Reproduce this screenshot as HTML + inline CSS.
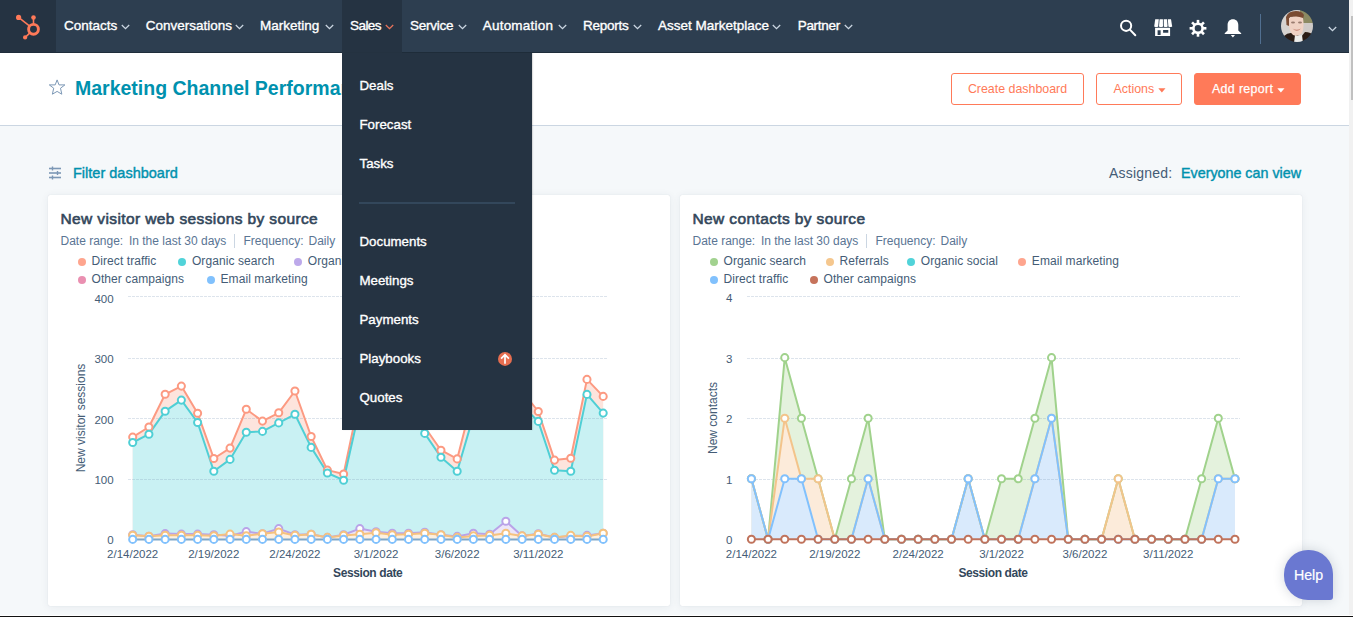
<!DOCTYPE html>
<html><head><meta charset="utf-8"><style>
*{margin:0;padding:0;box-sizing:border-box}
html,body{width:1353px;height:617px;overflow:hidden;background:#f5f8fa;font-family:'Liberation Sans',sans-serif;color:#33475b}
.abs{position:absolute}
#nav{position:absolute;left:0;top:0;width:1349px;height:53px;background:#2d3e50;border-bottom:1px solid #1f2d3b}
.ni{position:absolute;top:18px;font-size:13.5px;font-weight:400;-webkit-text-stroke:0.35px #fff;color:#fff;line-height:16px;white-space:nowrap}
#hdr{position:absolute;left:0;top:53px;width:1349px;height:73px;background:#fff;border-bottom:1px solid #cbd6e2}
.btn{position:absolute;top:73px;height:32px;border:1px solid #ff7a59;border-radius:3px;color:#ff7a59;font-size:12.4px;line-height:30px;white-space:nowrap}
.card{position:absolute;top:195px;height:411px;background:#fff;border-radius:2px;box-shadow:0 0 1px rgba(45,62,80,0.18),0 1px 8px rgba(45,62,80,0.07)}
.ct{position:absolute;font-size:15.5px;font-weight:400;-webkit-text-stroke:0.6px #33475b;letter-spacing:0.38px;color:#33475b;white-space:nowrap;line-height:18px}
.cs{position:absolute;font-size:12px;color:#5a7594;white-space:nowrap;line-height:14px}
.ld{position:absolute;width:8px;height:8px;border-radius:50%}
.lt{position:absolute;font-size:12px;color:#445c76;white-space:nowrap;line-height:16px;letter-spacing:0.08px}
.ax{font-size:11.5px;fill:#445c76;font-family:'Liberation Sans',sans-serif;}
.axt{font-size:12px;font-weight:700;letter-spacing:-0.4px;fill:#33475b;font-family:'Liberation Sans',sans-serif;}
.axr{font-size:12px;fill:#445c76;font-family:'Liberation Sans',sans-serif;}
#dd{position:absolute;left:342px;top:53px;width:190px;height:377px;background:#253342;box-shadow:1px 0 1px rgba(0,0,0,0.12)}
.di{position:absolute;left:17.5px;font-size:13.3px;font-weight:400;-webkit-text-stroke:0.35px #fff;color:#fff;line-height:16px;white-space:nowrap}
</style></head><body>
<div id="nav">
  <div class="abs" style="left:0;top:0;width:56px;height:52px;background:#253342"></div>
  <div class="abs" style="left:342px;top:0;width:59.7px;height:53px;background:#253342"></div>
  <svg class="abs" style="left:0;top:0" width="56" height="52" viewBox="0 0 56 52">
    <g fill="#ff7a59" stroke="#ff7a59">
      <circle cx="33.5" cy="29.3" r="4.9" fill="none" stroke-width="2.9"/>
      <line x1="18.6" y1="17.4" x2="30" y2="26.4" stroke-width="1.5"/>
      <line x1="33.5" y1="18" x2="33.5" y2="24" stroke-width="1.6"/>
      <line x1="25.2" y1="37.3" x2="30.2" y2="32.6" stroke-width="1.6"/>
      <circle cx="18.6" cy="17.4" r="2.6" stroke="none"/>
      <circle cx="33.5" cy="17.5" r="2.3" stroke="none"/>
      <circle cx="25.1" cy="37.4" r="2.1" stroke="none"/>
    </g>
  </svg>
  <span class="ni" style="left:64px;letter-spacing:0px">Contacts</span><span class="ni" style="left:145.7px;letter-spacing:0px">Conversations</span><span class="ni" style="left:260px;letter-spacing:0px">Marketing</span><span class="ni" style="left:350px;letter-spacing:-0.55px">Sales</span><span class="ni" style="left:410px;letter-spacing:-0.25px">Service</span><span class="ni" style="left:482.8px;letter-spacing:0.2px">Automation</span><span class="ni" style="left:583px;letter-spacing:-0.25px">Reports</span><span class="ni" style="left:658px;letter-spacing:0px">Asset Marketplace</span><span class="ni" style="left:797.7px;letter-spacing:-0.3px">Partner</span><svg style="position:absolute;left:121px;top:23.5px" width="9" height="6" viewBox="0 0 9 6"><path d="M0.8 1 L4.5 4.6 L8.2 1" fill="none" stroke="#cbd6e2" stroke-width="1.3"/></svg><svg style="position:absolute;left:235px;top:23.5px" width="9" height="6" viewBox="0 0 9 6"><path d="M0.8 1 L4.5 4.6 L8.2 1" fill="none" stroke="#cbd6e2" stroke-width="1.3"/></svg><svg style="position:absolute;left:325px;top:23.5px" width="9" height="6" viewBox="0 0 9 6"><path d="M0.8 1 L4.5 4.6 L8.2 1" fill="none" stroke="#cbd6e2" stroke-width="1.3"/></svg><svg style="position:absolute;left:385px;top:23.5px" width="9" height="6" viewBox="0 0 9 6"><path d="M0.8 1 L4.5 4.6 L8.2 1" fill="none" stroke="#e8735a" stroke-width="1.3"/></svg><svg style="position:absolute;left:458px;top:23.5px" width="9" height="6" viewBox="0 0 9 6"><path d="M0.8 1 L4.5 4.6 L8.2 1" fill="none" stroke="#cbd6e2" stroke-width="1.3"/></svg><svg style="position:absolute;left:558px;top:23.5px" width="9" height="6" viewBox="0 0 9 6"><path d="M0.8 1 L4.5 4.6 L8.2 1" fill="none" stroke="#cbd6e2" stroke-width="1.3"/></svg><svg style="position:absolute;left:633px;top:23.5px" width="9" height="6" viewBox="0 0 9 6"><path d="M0.8 1 L4.5 4.6 L8.2 1" fill="none" stroke="#cbd6e2" stroke-width="1.3"/></svg><svg style="position:absolute;left:772px;top:23.5px" width="9" height="6" viewBox="0 0 9 6"><path d="M0.8 1 L4.5 4.6 L8.2 1" fill="none" stroke="#cbd6e2" stroke-width="1.3"/></svg><svg style="position:absolute;left:844px;top:23.5px" width="9" height="6" viewBox="0 0 9 6"><path d="M0.8 1 L4.5 4.6 L8.2 1" fill="none" stroke="#cbd6e2" stroke-width="1.3"/></svg>
  <svg class="abs" style="left:1110px;top:10px" width="160" height="36" viewBox="1110 10 160 36">
    <circle cx="1126.1" cy="25.8" r="5.1" fill="none" stroke="#fff" stroke-width="2"/>
    <line x1="1129.9" y1="29.6" x2="1135.3" y2="35.2" stroke="#fff" stroke-width="2" stroke-linecap="round"/>
    <g fill="#fff">
      <path d="M1155.2 19.3 H1158.8 L1158.2 26.5 Q1156.5 27.6 1154.2 26.5 Z"/>
      <path d="M1159.6 19.3 H1162.9 L1163 26.5 Q1161 27.6 1159 26.5 Z"/>
      <path d="M1163.7 19.3 H1167 L1167.6 26.5 Q1165.6 27.6 1163.8 26.5 Z"/>
      <path d="M1167.8 19.3 H1171 L1172.2 26.5 Q1170.2 27.6 1168.4 26.5 Z"/>
      <path d="M1155.1 27.8 H1170.1 V35.9 H1155.1 Z M1157.6 30.2 V34.9 H1160.6 V30.2 Z M1163.1 30 V32.8 H1168.3 V30 Z" fill-rule="evenodd"/>
    </g>
    <g transform="translate(1198 28.3)" fill="#fff"><circle r="4.6" fill="none" stroke="#fff" stroke-width="2.6"/><rect x="-1.3" y="-8.4" width="2.6" height="4" transform="rotate(0)"/><rect x="-1.3" y="-8.4" width="2.6" height="4" transform="rotate(45)"/><rect x="-1.3" y="-8.4" width="2.6" height="4" transform="rotate(90)"/><rect x="-1.3" y="-8.4" width="2.6" height="4" transform="rotate(135)"/><rect x="-1.3" y="-8.4" width="2.6" height="4" transform="rotate(180)"/><rect x="-1.3" y="-8.4" width="2.6" height="4" transform="rotate(225)"/><rect x="-1.3" y="-8.4" width="2.6" height="4" transform="rotate(270)"/><rect x="-1.3" y="-8.4" width="2.6" height="4" transform="rotate(315)"/></g>
    <path fill="#fff" d="M1232.9 19.3 C1229.6 19.3 1227.6 21.6 1227.6 25 V30.6 L1224.7 33.2 V34 H1241.2 V33.2 L1238.3 30.6 V25 C1238.3 21.6 1236.3 19.3 1232.9 19.3 Z M1230.8 35 H1235 L1232.9 37.6 Z"/>
    <line x1="1260.5" y1="14" x2="1260.5" y2="44" stroke="#516f90" stroke-width="1"/>
  </svg>
  <svg class="abs" style="left:1281px;top:10px" width="32" height="32" viewBox="0 0 32 32">
    <defs><clipPath id="avc"><circle cx="16" cy="16" r="16"/></clipPath><filter id="avb" x="-10%" y="-10%" width="120%" height="120%"><feGaussianBlur stdDeviation="0.7"/></filter></defs>
    <g clip-path="url(#avc)"><g filter="url(#avb)">
      <rect x="-2" y="-2" width="36" height="36" fill="#d6d2cf"/>
      <rect x="19" y="-2" width="15" height="16" fill="#8c8a62"/>
      <rect x="22" y="13" width="12" height="12" fill="#cfcac7"/>
      <path d="M2 40 L3 26 Q8 21 14 24 L20 27 L24 22 Q30 22 33 26 L33 40 Z" fill="#2b1c12"/>
      <path d="M13 33 L14 25 Q17 26.5 21 25 L22 33 Z" fill="#ececea"/>
      <path d="M5 7 Q7 1 15 1 Q21 1 23 5 L22 9 Q16 6 9 7 L8 16 L5.5 15 Z" fill="#7a4b33"/>
      <path d="M8 8 Q15 5 22 8 Q23.5 17 21 23 Q17 27 12 25 Q8 21 8 14 Z" fill="#f0d2c4"/>
      <ellipse cx="12" cy="12.5" rx="2" ry="0.9" fill="#9b7c70"/>
      <ellipse cx="19" cy="12.5" rx="2" ry="0.9" fill="#9b7c70"/>
      <path d="M11.5 18.5 Q15.5 21 20 18.5 Q16 23 11.5 18.5 Z" fill="#c07a6a"/>
    </g></g>
  </svg>
  <svg style="position:absolute;left:1327.5px;top:25.8px" width="9" height="6" viewBox="0 0 9 6"><path d="M0.8 1 L4.5 4.6 L8.2 1" fill="none" stroke="#cbd6e2" stroke-width="1.3"/></svg>
</div>
<div id="hdr">
  <svg class="abs" style="left:48px;top:25.8px" width="18" height="17" viewBox="0 0 18 17"><path d="M9.1 0.9 L11 5.9 L16.9 5.9 L12.5 9.2 L13.8 15.2 L9.1 12.4 L4.4 15.2 L5.7 9.2 L1.3 5.9 L7.2 5.9 Z" fill="none" stroke="#7c98b6" stroke-width="1" stroke-linejoin="miter"/></svg>
  <div class="abs" style="left:75px;top:23px;font-size:19.5px;font-weight:700;color:#0091ae;line-height:24px;white-space:nowrap">Marketing Channel Performance</div>
</div>
<div class="btn" style="left:951px;width:133px;text-align:center">Create dashboard</div>
<div class="btn" style="left:1096px;width:86px;padding-left:16.5px">Actions<svg style="position:absolute;left:61px;top:13.5px" width="8" height="5" viewBox="0 0 8 5"><path d="M0.3 0.3 H7.5 L3.9 4.4 Z" fill="#ff7a59"/></svg></div>
<div class="btn" style="left:1194px;width:107px;background:#ff7a59;color:#fff;padding-left:17px;letter-spacing:0.35px;-webkit-text-stroke:0.25px #fff">Add report<svg style="position:absolute;left:82px;top:13.5px" width="8" height="5" viewBox="0 0 8 5"><path d="M0.3 0.3 H7.5 L3.9 4.4 Z" fill="#fff"/></svg></div>

<svg class="abs" style="left:48px;top:166px" width="14" height="14" viewBox="0 0 14 14"><g stroke="#7c98b6" stroke-width="1.6"><line x1="1" y1="2.5" x2="13" y2="2.5"/><line x1="1" y1="7" x2="13" y2="7"/><line x1="1" y1="11.5" x2="13" y2="11.5"/></g><g stroke="#7c98b6" stroke-width="1.4"><line x1="4.5" y1="0.5" x2="4.5" y2="4.5"/><line x1="9.5" y1="5" x2="9.5" y2="9"/><line x1="4.5" y1="9.5" x2="4.5" y2="13.5"/></g></svg>
<div class="abs" style="left:73px;top:164.5px;font-size:14.5px;font-weight:400;-webkit-text-stroke:0.4px #0091ae;color:#0091ae;line-height:16px;white-space:nowrap">Filter dashboard</div>
<div class="abs" style="left:1109px;top:164.5px;font-size:14px;letter-spacing:0.22px;color:#445c76;line-height:16px;white-space:nowrap">Assigned:</div>
<div class="abs" style="left:1181px;top:164.5px;font-size:14.3px;font-weight:400;-webkit-text-stroke:0.4px #0091ae;color:#0091ae;line-height:16px;white-space:nowrap">Everyone can view</div>

<div class="card" style="left:48px;width:622px"></div>
<div class="card" style="left:680px;width:622px"></div>
<div class="ct" style="left:60.5px;top:209.5px">New visitor web sessions by source</div>
<div class="cs" style="left:60.5px;top:234px">Date range:<span style="margin-left:2.4px"> In the last 30 days</span></div>
<div class="abs" style="left:234px;top:234px;width:1px;height:14px;background:#cbd6e2"></div>
<div class="cs" style="left:243.5px;top:234px">Frequency:<span style="margin-left:1.6px"> Daily</span></div>
<div class="ct" style="left:692.5px;top:209.5px">New contacts by source</div>
<div class="cs" style="left:692.5px;top:234px">Date range:<span style="margin-left:2.4px"> In the last 30 days</span></div>
<div class="abs" style="left:866px;top:234px;width:1px;height:14px;background:#cbd6e2"></div>
<div class="cs" style="left:875.5px;top:234px">Frequency:<span style="margin-left:1.6px"> Daily</span></div>
<span class="ld" style="left:77.7px;top:257.8px;background:#fea58e"></span><span class="lt" style="left:91.5px;top:253px">Direct traffic</span><span class="ld" style="left:178.1px;top:257.8px;background:#51d3d9"></span><span class="lt" style="left:191.9px;top:253px">Organic search</span><span class="ld" style="left:294px;top:257.8px;background:#bda9ea"></span><span class="lt" style="left:307.8px;top:253px">Organic social</span><span class="ld" style="left:77.7px;top:275.5px;background:#ea90b1"></span><span class="lt" style="left:91.5px;top:270.7px">Other campaigns</span><span class="ld" style="left:206.7px;top:275.5px;background:#81c1fd"></span><span class="lt" style="left:220.5px;top:270.7px">Email marketing</span><span class="ld" style="left:709.7px;top:257.8px;background:#a2d28f"></span><span class="lt" style="left:723.5px;top:253px">Organic search</span><span class="ld" style="left:825.7px;top:257.8px;background:#f5c78e"></span><span class="lt" style="left:839.5px;top:253px">Referrals</span><span class="ld" style="left:907px;top:257.8px;background:#51d3d9"></span><span class="lt" style="left:920.8px;top:253px">Organic social</span><span class="ld" style="left:1018px;top:257.8px;background:#fea58e"></span><span class="lt" style="left:1031.8px;top:253px">Email marketing</span><span class="ld" style="left:709.7px;top:275.5px;background:#81c1fd"></span><span class="lt" style="left:723.5px;top:270.7px">Direct traffic</span><span class="ld" style="left:809.7px;top:275.5px;background:#c6735b"></span><span class="lt" style="left:823.5px;top:270.7px">Other campaigns</span>
<svg class="abs" style="left:0;top:0" width="1353" height="617" viewBox="0 0 1353 617">
<text x="113.6" y="302.5" text-anchor="end" class="ax">400</text><text x="113.6" y="363" text-anchor="end" class="ax">300</text><text x="113.6" y="423.5" text-anchor="end" class="ax">200</text><text x="113.6" y="484" text-anchor="end" class="ax">100</text><text x="113.6" y="544.4" text-anchor="end" class="ax">0</text><path d="M132.7 437.1 L148.92 427 L165.15 394.3 L181.37 386.1 L197.6 413.2 L213.82 458.5 L230.04 448.1 L246.27 409.3 L262.49 421.1 L278.72 412.8 L294.94 391 L311.16 436.5 L327.39 470.1 L343.61 474 L359.84 397 L376.06 380 L392.28 385 L408.51 395 L424.73 427 L440.96 450.2 L457.18 458.9 L473.4 395.5 L489.63 380 L505.85 370 L522.08 391 L538.3 411.5 L554.52 460.1 L570.75 458.2 L586.97 379.4 L603.2 396.4 L603.2 539.4 L132.7 539.4 Z" fill="#fde4dd"/><path d="M132.7 442.5 L148.92 434.2 L165.15 411.2 L181.37 400.1 L197.6 422.5 L213.82 471.3 L230.04 459.4 L246.27 432.2 L262.49 431.4 L278.72 422.9 L294.94 414.3 L311.16 447.4 L327.39 473 L343.61 480.2 L359.84 408 L376.06 395 L392.28 400 L408.51 410 L424.73 433.4 L440.96 457.3 L457.18 471.3 L473.4 415.9 L489.63 395 L505.85 385 L522.08 405.8 L538.3 421.4 L554.52 470.2 L570.75 471.2 L586.97 394.4 L603.2 413.1 L603.2 539.4 L132.7 539.4 Z" fill="#c9f1f3"/><path d="M132.7 534.7 L148.92 536.2 L165.15 533.6 L181.37 534.1 L197.6 534.1 L213.82 534.7 L230.04 535.7 L246.27 531.6 L262.49 533.8 L278.72 528.6 L294.94 534.8 L311.16 534.3 L327.39 537.4 L343.61 534.8 L359.84 528.6 L376.06 531.7 L392.28 533.3 L408.51 533.3 L424.73 532.2 L440.96 534.8 L457.18 536.4 L473.4 533.3 L489.63 534.3 L505.85 521.2 L522.08 535.9 L538.3 533.8 L554.52 537.4 L570.75 535.9 L586.97 535.4 L603.2 533.3 L603.2 539.4 L132.7 539.4 Z" fill="#ece6f9"/><path d="M132.7 535.2 L148.92 536.2 L165.15 535.2 L181.37 535.2 L197.6 535.2 L213.82 535.7 L230.04 534.1 L246.27 535.7 L262.49 533.8 L278.72 532 L294.94 535.4 L311.16 534.3 L327.39 537.4 L343.61 535.4 L359.84 534.3 L376.06 532.8 L392.28 534.8 L408.51 534.3 L424.73 533.3 L440.96 534.8 L457.18 537.4 L473.4 535.9 L489.63 535.4 L505.85 533.3 L522.08 535.9 L538.3 534.3 L554.52 537.4 L570.75 535.4 L586.97 536.4 L603.2 533.3 L603.2 539.4 L132.7 539.4 Z" fill="#fdf0e0"/><line x1="128" y1="296.5" x2="607" y2="296.5" stroke="#7c98b6" stroke-width="1" stroke-dasharray="3 1" opacity="0.25"/><line x1="128" y1="358.5" x2="607" y2="358.5" stroke="#7c98b6" stroke-width="1" stroke-dasharray="3 1" opacity="0.25"/><line x1="128" y1="418.5" x2="607" y2="418.5" stroke="#7c98b6" stroke-width="1" stroke-dasharray="3 1" opacity="0.25"/><line x1="128" y1="479.5" x2="607" y2="479.5" stroke="#7c98b6" stroke-width="1" stroke-dasharray="3 1" opacity="0.25"/><path d="M132.7 437.1 L148.92 427 L165.15 394.3 L181.37 386.1 L197.6 413.2 L213.82 458.5 L230.04 448.1 L246.27 409.3 L262.49 421.1 L278.72 412.8 L294.94 391 L311.16 436.5 L327.39 470.1 L343.61 474 L359.84 397 L376.06 380 L392.28 385 L408.51 395 L424.73 427 L440.96 450.2 L457.18 458.9 L473.4 395.5 L489.63 380 L505.85 370 L522.08 391 L538.3 411.5 L554.52 460.1 L570.75 458.2 L586.97 379.4 L603.2 396.4" fill="none" stroke="#fc9a82" stroke-width="2" stroke-linejoin="round"/><path d="M132.7 442.5 L148.92 434.2 L165.15 411.2 L181.37 400.1 L197.6 422.5 L213.82 471.3 L230.04 459.4 L246.27 432.2 L262.49 431.4 L278.72 422.9 L294.94 414.3 L311.16 447.4 L327.39 473 L343.61 480.2 L359.84 408 L376.06 395 L392.28 400 L408.51 410 L424.73 433.4 L440.96 457.3 L457.18 471.3 L473.4 415.9 L489.63 395 L505.85 385 L522.08 405.8 L538.3 421.4 L554.52 470.2 L570.75 471.2 L586.97 394.4 L603.2 413.1" fill="none" stroke="#4fcfd5" stroke-width="2" stroke-linejoin="round"/><path d="M132.7 534.7 L148.92 536.2 L165.15 533.6 L181.37 534.1 L197.6 534.1 L213.82 534.7 L230.04 535.7 L246.27 531.6 L262.49 533.8 L278.72 528.6 L294.94 534.8 L311.16 534.3 L327.39 537.4 L343.61 534.8 L359.84 528.6 L376.06 531.7 L392.28 533.3 L408.51 533.3 L424.73 532.2 L440.96 534.8 L457.18 536.4 L473.4 533.3 L489.63 534.3 L505.85 521.2 L522.08 535.9 L538.3 533.8 L554.52 537.4 L570.75 535.9 L586.97 535.4 L603.2 533.3" fill="none" stroke="#b9a3e8" stroke-width="2" stroke-linejoin="round"/><path d="M132.7 535.2 L148.92 536.2 L165.15 535.2 L181.37 535.2 L197.6 535.2 L213.82 535.7 L230.04 534.1 L246.27 535.7 L262.49 533.8 L278.72 532 L294.94 535.4 L311.16 534.3 L327.39 537.4 L343.61 535.4 L359.84 534.3 L376.06 532.8 L392.28 534.8 L408.51 534.3 L424.73 533.3 L440.96 534.8 L457.18 537.4 L473.4 535.9 L489.63 535.4 L505.85 533.3 L522.08 535.9 L538.3 534.3 L554.52 537.4 L570.75 535.4 L586.97 536.4 L603.2 533.3" fill="none" stroke="#f5c27f" stroke-width="2" stroke-linejoin="round"/><path d="M132.7 539.4 L148.92 539.4 L165.15 539.4 L181.37 539.4 L197.6 539.4 L213.82 539.4 L230.04 539.4 L246.27 539.4 L262.49 539.4 L278.72 539.4 L294.94 539.4 L311.16 539.4 L327.39 539.4 L343.61 539.4 L359.84 539.4 L376.06 539.4 L392.28 539.4 L408.51 539.4 L424.73 539.4 L440.96 539.4 L457.18 539.4 L473.4 539.4 L489.63 539.4 L505.85 539.4 L522.08 539.4 L538.3 539.4 L554.52 539.4 L570.75 539.4 L586.97 539.4 L603.2 539.4" fill="none" stroke="#7fa7c9" stroke-width="2"/><circle cx="132.7" cy="437.1" r="3.55" fill="#fff" stroke="#fc9a82" stroke-width="2"/><circle cx="148.92" cy="427" r="3.55" fill="#fff" stroke="#fc9a82" stroke-width="2"/><circle cx="165.15" cy="394.3" r="3.55" fill="#fff" stroke="#fc9a82" stroke-width="2"/><circle cx="181.37" cy="386.1" r="3.55" fill="#fff" stroke="#fc9a82" stroke-width="2"/><circle cx="197.6" cy="413.2" r="3.55" fill="#fff" stroke="#fc9a82" stroke-width="2"/><circle cx="213.82" cy="458.5" r="3.55" fill="#fff" stroke="#fc9a82" stroke-width="2"/><circle cx="230.04" cy="448.1" r="3.55" fill="#fff" stroke="#fc9a82" stroke-width="2"/><circle cx="246.27" cy="409.3" r="3.55" fill="#fff" stroke="#fc9a82" stroke-width="2"/><circle cx="262.49" cy="421.1" r="3.55" fill="#fff" stroke="#fc9a82" stroke-width="2"/><circle cx="278.72" cy="412.8" r="3.55" fill="#fff" stroke="#fc9a82" stroke-width="2"/><circle cx="294.94" cy="391" r="3.55" fill="#fff" stroke="#fc9a82" stroke-width="2"/><circle cx="311.16" cy="436.5" r="3.55" fill="#fff" stroke="#fc9a82" stroke-width="2"/><circle cx="327.39" cy="470.1" r="3.55" fill="#fff" stroke="#fc9a82" stroke-width="2"/><circle cx="343.61" cy="474" r="3.55" fill="#fff" stroke="#fc9a82" stroke-width="2"/><circle cx="359.84" cy="397" r="3.55" fill="#fff" stroke="#fc9a82" stroke-width="2"/><circle cx="376.06" cy="380" r="3.55" fill="#fff" stroke="#fc9a82" stroke-width="2"/><circle cx="392.28" cy="385" r="3.55" fill="#fff" stroke="#fc9a82" stroke-width="2"/><circle cx="408.51" cy="395" r="3.55" fill="#fff" stroke="#fc9a82" stroke-width="2"/><circle cx="424.73" cy="427" r="3.55" fill="#fff" stroke="#fc9a82" stroke-width="2"/><circle cx="440.96" cy="450.2" r="3.55" fill="#fff" stroke="#fc9a82" stroke-width="2"/><circle cx="457.18" cy="458.9" r="3.55" fill="#fff" stroke="#fc9a82" stroke-width="2"/><circle cx="473.4" cy="395.5" r="3.55" fill="#fff" stroke="#fc9a82" stroke-width="2"/><circle cx="489.63" cy="380" r="3.55" fill="#fff" stroke="#fc9a82" stroke-width="2"/><circle cx="505.85" cy="370" r="3.55" fill="#fff" stroke="#fc9a82" stroke-width="2"/><circle cx="522.08" cy="391" r="3.55" fill="#fff" stroke="#fc9a82" stroke-width="2"/><circle cx="538.3" cy="411.5" r="3.55" fill="#fff" stroke="#fc9a82" stroke-width="2"/><circle cx="554.52" cy="460.1" r="3.55" fill="#fff" stroke="#fc9a82" stroke-width="2"/><circle cx="570.75" cy="458.2" r="3.55" fill="#fff" stroke="#fc9a82" stroke-width="2"/><circle cx="586.97" cy="379.4" r="3.55" fill="#fff" stroke="#fc9a82" stroke-width="2"/><circle cx="603.2" cy="396.4" r="3.55" fill="#fff" stroke="#fc9a82" stroke-width="2"/><circle cx="132.7" cy="442.5" r="3.55" fill="#fff" stroke="#4fcfd5" stroke-width="2"/><circle cx="148.92" cy="434.2" r="3.55" fill="#fff" stroke="#4fcfd5" stroke-width="2"/><circle cx="165.15" cy="411.2" r="3.55" fill="#fff" stroke="#4fcfd5" stroke-width="2"/><circle cx="181.37" cy="400.1" r="3.55" fill="#fff" stroke="#4fcfd5" stroke-width="2"/><circle cx="197.6" cy="422.5" r="3.55" fill="#fff" stroke="#4fcfd5" stroke-width="2"/><circle cx="213.82" cy="471.3" r="3.55" fill="#fff" stroke="#4fcfd5" stroke-width="2"/><circle cx="230.04" cy="459.4" r="3.55" fill="#fff" stroke="#4fcfd5" stroke-width="2"/><circle cx="246.27" cy="432.2" r="3.55" fill="#fff" stroke="#4fcfd5" stroke-width="2"/><circle cx="262.49" cy="431.4" r="3.55" fill="#fff" stroke="#4fcfd5" stroke-width="2"/><circle cx="278.72" cy="422.9" r="3.55" fill="#fff" stroke="#4fcfd5" stroke-width="2"/><circle cx="294.94" cy="414.3" r="3.55" fill="#fff" stroke="#4fcfd5" stroke-width="2"/><circle cx="311.16" cy="447.4" r="3.55" fill="#fff" stroke="#4fcfd5" stroke-width="2"/><circle cx="327.39" cy="473" r="3.55" fill="#fff" stroke="#4fcfd5" stroke-width="2"/><circle cx="343.61" cy="480.2" r="3.55" fill="#fff" stroke="#4fcfd5" stroke-width="2"/><circle cx="359.84" cy="408" r="3.55" fill="#fff" stroke="#4fcfd5" stroke-width="2"/><circle cx="376.06" cy="395" r="3.55" fill="#fff" stroke="#4fcfd5" stroke-width="2"/><circle cx="392.28" cy="400" r="3.55" fill="#fff" stroke="#4fcfd5" stroke-width="2"/><circle cx="408.51" cy="410" r="3.55" fill="#fff" stroke="#4fcfd5" stroke-width="2"/><circle cx="424.73" cy="433.4" r="3.55" fill="#fff" stroke="#4fcfd5" stroke-width="2"/><circle cx="440.96" cy="457.3" r="3.55" fill="#fff" stroke="#4fcfd5" stroke-width="2"/><circle cx="457.18" cy="471.3" r="3.55" fill="#fff" stroke="#4fcfd5" stroke-width="2"/><circle cx="473.4" cy="415.9" r="3.55" fill="#fff" stroke="#4fcfd5" stroke-width="2"/><circle cx="489.63" cy="395" r="3.55" fill="#fff" stroke="#4fcfd5" stroke-width="2"/><circle cx="505.85" cy="385" r="3.55" fill="#fff" stroke="#4fcfd5" stroke-width="2"/><circle cx="522.08" cy="405.8" r="3.55" fill="#fff" stroke="#4fcfd5" stroke-width="2"/><circle cx="538.3" cy="421.4" r="3.55" fill="#fff" stroke="#4fcfd5" stroke-width="2"/><circle cx="554.52" cy="470.2" r="3.55" fill="#fff" stroke="#4fcfd5" stroke-width="2"/><circle cx="570.75" cy="471.2" r="3.55" fill="#fff" stroke="#4fcfd5" stroke-width="2"/><circle cx="586.97" cy="394.4" r="3.55" fill="#fff" stroke="#4fcfd5" stroke-width="2"/><circle cx="603.2" cy="413.1" r="3.55" fill="#fff" stroke="#4fcfd5" stroke-width="2"/><circle cx="132.7" cy="534.7" r="3.55" fill="#fff" stroke="#b9a3e8" stroke-width="2"/><circle cx="148.92" cy="536.2" r="3.55" fill="#fff" stroke="#b9a3e8" stroke-width="2"/><circle cx="165.15" cy="533.6" r="3.55" fill="#fff" stroke="#b9a3e8" stroke-width="2"/><circle cx="181.37" cy="534.1" r="3.55" fill="#fff" stroke="#b9a3e8" stroke-width="2"/><circle cx="197.6" cy="534.1" r="3.55" fill="#fff" stroke="#b9a3e8" stroke-width="2"/><circle cx="213.82" cy="534.7" r="3.55" fill="#fff" stroke="#b9a3e8" stroke-width="2"/><circle cx="230.04" cy="535.7" r="3.55" fill="#fff" stroke="#b9a3e8" stroke-width="2"/><circle cx="246.27" cy="531.6" r="3.55" fill="#fff" stroke="#b9a3e8" stroke-width="2"/><circle cx="262.49" cy="533.8" r="3.55" fill="#fff" stroke="#b9a3e8" stroke-width="2"/><circle cx="278.72" cy="528.6" r="3.55" fill="#fff" stroke="#b9a3e8" stroke-width="2"/><circle cx="294.94" cy="534.8" r="3.55" fill="#fff" stroke="#b9a3e8" stroke-width="2"/><circle cx="311.16" cy="534.3" r="3.55" fill="#fff" stroke="#b9a3e8" stroke-width="2"/><circle cx="327.39" cy="537.4" r="3.55" fill="#fff" stroke="#b9a3e8" stroke-width="2"/><circle cx="343.61" cy="534.8" r="3.55" fill="#fff" stroke="#b9a3e8" stroke-width="2"/><circle cx="359.84" cy="528.6" r="3.55" fill="#fff" stroke="#b9a3e8" stroke-width="2"/><circle cx="376.06" cy="531.7" r="3.55" fill="#fff" stroke="#b9a3e8" stroke-width="2"/><circle cx="392.28" cy="533.3" r="3.55" fill="#fff" stroke="#b9a3e8" stroke-width="2"/><circle cx="408.51" cy="533.3" r="3.55" fill="#fff" stroke="#b9a3e8" stroke-width="2"/><circle cx="424.73" cy="532.2" r="3.55" fill="#fff" stroke="#b9a3e8" stroke-width="2"/><circle cx="440.96" cy="534.8" r="3.55" fill="#fff" stroke="#b9a3e8" stroke-width="2"/><circle cx="457.18" cy="536.4" r="3.55" fill="#fff" stroke="#b9a3e8" stroke-width="2"/><circle cx="473.4" cy="533.3" r="3.55" fill="#fff" stroke="#b9a3e8" stroke-width="2"/><circle cx="489.63" cy="534.3" r="3.55" fill="#fff" stroke="#b9a3e8" stroke-width="2"/><circle cx="505.85" cy="521.2" r="3.55" fill="#fff" stroke="#b9a3e8" stroke-width="2"/><circle cx="522.08" cy="535.9" r="3.55" fill="#fff" stroke="#b9a3e8" stroke-width="2"/><circle cx="538.3" cy="533.8" r="3.55" fill="#fff" stroke="#b9a3e8" stroke-width="2"/><circle cx="554.52" cy="537.4" r="3.55" fill="#fff" stroke="#b9a3e8" stroke-width="2"/><circle cx="570.75" cy="535.9" r="3.55" fill="#fff" stroke="#b9a3e8" stroke-width="2"/><circle cx="586.97" cy="535.4" r="3.55" fill="#fff" stroke="#b9a3e8" stroke-width="2"/><circle cx="603.2" cy="533.3" r="3.55" fill="#fff" stroke="#b9a3e8" stroke-width="2"/><circle cx="132.7" cy="535.2" r="3.55" fill="#fff" stroke="#f5c27f" stroke-width="2"/><circle cx="148.92" cy="536.2" r="3.55" fill="#fff" stroke="#f5c27f" stroke-width="2"/><circle cx="165.15" cy="535.2" r="3.55" fill="#fff" stroke="#f5c27f" stroke-width="2"/><circle cx="181.37" cy="535.2" r="3.55" fill="#fff" stroke="#f5c27f" stroke-width="2"/><circle cx="197.6" cy="535.2" r="3.55" fill="#fff" stroke="#f5c27f" stroke-width="2"/><circle cx="213.82" cy="535.7" r="3.55" fill="#fff" stroke="#f5c27f" stroke-width="2"/><circle cx="230.04" cy="534.1" r="3.55" fill="#fff" stroke="#f5c27f" stroke-width="2"/><circle cx="246.27" cy="535.7" r="3.55" fill="#fff" stroke="#f5c27f" stroke-width="2"/><circle cx="262.49" cy="533.8" r="3.55" fill="#fff" stroke="#f5c27f" stroke-width="2"/><circle cx="278.72" cy="532" r="3.55" fill="#fff" stroke="#f5c27f" stroke-width="2"/><circle cx="294.94" cy="535.4" r="3.55" fill="#fff" stroke="#f5c27f" stroke-width="2"/><circle cx="311.16" cy="534.3" r="3.55" fill="#fff" stroke="#f5c27f" stroke-width="2"/><circle cx="327.39" cy="537.4" r="3.55" fill="#fff" stroke="#f5c27f" stroke-width="2"/><circle cx="343.61" cy="535.4" r="3.55" fill="#fff" stroke="#f5c27f" stroke-width="2"/><circle cx="359.84" cy="534.3" r="3.55" fill="#fff" stroke="#f5c27f" stroke-width="2"/><circle cx="376.06" cy="532.8" r="3.55" fill="#fff" stroke="#f5c27f" stroke-width="2"/><circle cx="392.28" cy="534.8" r="3.55" fill="#fff" stroke="#f5c27f" stroke-width="2"/><circle cx="408.51" cy="534.3" r="3.55" fill="#fff" stroke="#f5c27f" stroke-width="2"/><circle cx="424.73" cy="533.3" r="3.55" fill="#fff" stroke="#f5c27f" stroke-width="2"/><circle cx="440.96" cy="534.8" r="3.55" fill="#fff" stroke="#f5c27f" stroke-width="2"/><circle cx="457.18" cy="537.4" r="3.55" fill="#fff" stroke="#f5c27f" stroke-width="2"/><circle cx="473.4" cy="535.9" r="3.55" fill="#fff" stroke="#f5c27f" stroke-width="2"/><circle cx="489.63" cy="535.4" r="3.55" fill="#fff" stroke="#f5c27f" stroke-width="2"/><circle cx="505.85" cy="533.3" r="3.55" fill="#fff" stroke="#f5c27f" stroke-width="2"/><circle cx="522.08" cy="535.9" r="3.55" fill="#fff" stroke="#f5c27f" stroke-width="2"/><circle cx="538.3" cy="534.3" r="3.55" fill="#fff" stroke="#f5c27f" stroke-width="2"/><circle cx="554.52" cy="537.4" r="3.55" fill="#fff" stroke="#f5c27f" stroke-width="2"/><circle cx="570.75" cy="535.4" r="3.55" fill="#fff" stroke="#f5c27f" stroke-width="2"/><circle cx="586.97" cy="536.4" r="3.55" fill="#fff" stroke="#f5c27f" stroke-width="2"/><circle cx="603.2" cy="533.3" r="3.55" fill="#fff" stroke="#f5c27f" stroke-width="2"/><circle cx="132.7" cy="539.4" r="3.55" fill="#fff" stroke="#81c1fd" stroke-width="2"/><circle cx="148.92" cy="539.4" r="3.55" fill="#fff" stroke="#81c1fd" stroke-width="2"/><circle cx="165.15" cy="539.4" r="3.55" fill="#fff" stroke="#81c1fd" stroke-width="2"/><circle cx="181.37" cy="539.4" r="3.55" fill="#fff" stroke="#81c1fd" stroke-width="2"/><circle cx="197.6" cy="539.4" r="3.55" fill="#fff" stroke="#81c1fd" stroke-width="2"/><circle cx="213.82" cy="539.4" r="3.55" fill="#fff" stroke="#81c1fd" stroke-width="2"/><circle cx="230.04" cy="539.4" r="3.55" fill="#fff" stroke="#81c1fd" stroke-width="2"/><circle cx="246.27" cy="539.4" r="3.55" fill="#fff" stroke="#81c1fd" stroke-width="2"/><circle cx="262.49" cy="539.4" r="3.55" fill="#fff" stroke="#81c1fd" stroke-width="2"/><circle cx="278.72" cy="539.4" r="3.55" fill="#fff" stroke="#81c1fd" stroke-width="2"/><circle cx="294.94" cy="539.4" r="3.55" fill="#fff" stroke="#81c1fd" stroke-width="2"/><circle cx="311.16" cy="539.4" r="3.55" fill="#fff" stroke="#81c1fd" stroke-width="2"/><circle cx="327.39" cy="539.4" r="3.55" fill="#fff" stroke="#81c1fd" stroke-width="2"/><circle cx="343.61" cy="539.4" r="3.55" fill="#fff" stroke="#81c1fd" stroke-width="2"/><circle cx="359.84" cy="539.4" r="3.55" fill="#fff" stroke="#81c1fd" stroke-width="2"/><circle cx="376.06" cy="539.4" r="3.55" fill="#fff" stroke="#81c1fd" stroke-width="2"/><circle cx="392.28" cy="539.4" r="3.55" fill="#fff" stroke="#81c1fd" stroke-width="2"/><circle cx="408.51" cy="539.4" r="3.55" fill="#fff" stroke="#81c1fd" stroke-width="2"/><circle cx="424.73" cy="539.4" r="3.55" fill="#fff" stroke="#81c1fd" stroke-width="2"/><circle cx="440.96" cy="539.4" r="3.55" fill="#fff" stroke="#81c1fd" stroke-width="2"/><circle cx="457.18" cy="539.4" r="3.55" fill="#fff" stroke="#81c1fd" stroke-width="2"/><circle cx="473.4" cy="539.4" r="3.55" fill="#fff" stroke="#81c1fd" stroke-width="2"/><circle cx="489.63" cy="539.4" r="3.55" fill="#fff" stroke="#81c1fd" stroke-width="2"/><circle cx="505.85" cy="539.4" r="3.55" fill="#fff" stroke="#81c1fd" stroke-width="2"/><circle cx="522.08" cy="539.4" r="3.55" fill="#fff" stroke="#81c1fd" stroke-width="2"/><circle cx="538.3" cy="539.4" r="3.55" fill="#fff" stroke="#81c1fd" stroke-width="2"/><circle cx="554.52" cy="539.4" r="3.55" fill="#fff" stroke="#81c1fd" stroke-width="2"/><circle cx="570.75" cy="539.4" r="3.55" fill="#fff" stroke="#81c1fd" stroke-width="2"/><circle cx="586.97" cy="539.4" r="3.55" fill="#fff" stroke="#81c1fd" stroke-width="2"/><circle cx="603.2" cy="539.4" r="3.55" fill="#fff" stroke="#81c1fd" stroke-width="2"/><text x="132.7" y="558" text-anchor="middle" class="ax">2/14/2022</text><text x="213.82" y="558" text-anchor="middle" class="ax">2/19/2022</text><text x="294.94" y="558" text-anchor="middle" class="ax">2/24/2022</text><text x="376.06" y="558" text-anchor="middle" class="ax">3/1/2022</text><text x="457.18" y="558" text-anchor="middle" class="ax">3/6/2022</text><text x="538.3" y="558" text-anchor="middle" class="ax">3/11/2022</text><text x="367.7" y="576.6" text-anchor="middle" class="axt">Session date</text><text transform="translate(84.5 418) rotate(-90)" text-anchor="middle" class="axr">New visitor sessions</text>
<text x="732.4" y="302.1" text-anchor="end" class="ax">4</text><text x="732.4" y="362.65" text-anchor="end" class="ax">3</text><text x="732.4" y="423.2" text-anchor="end" class="ax">2</text><text x="732.4" y="483.75" text-anchor="end" class="ax">1</text><text x="732.4" y="544.3" text-anchor="end" class="ax">0</text><path d="M751.4 478.75 L768.07 539.3 L784.75 357.65 L801.42 418.2 L818.1 478.75 L834.77 539.3 L851.45 478.75 L868.12 418.2 L884.8 539.3 L901.48 539.3 L918.15 539.3 L934.83 539.3 L951.5 539.3 L968.17 478.75 L984.85 539.3 L1001.52 478.75 L1018.2 478.75 L1034.88 418.2 L1051.55 357.65 L1068.22 539.3 L1084.9 539.3 L1101.58 539.3 L1118.25 478.75 L1134.92 539.3 L1151.6 539.3 L1168.28 539.3 L1184.95 539.3 L1201.62 478.75 L1218.3 418.2 L1234.97 478.75 L1234.97 539.3 L751.4 539.3 Z" fill="#e4f2dd"/><path d="M751.4 478.75 L768.07 539.3 L784.75 418.2 L801.42 478.75 L818.1 478.75 L834.77 539.3 L851.45 539.3 L868.12 478.75 L884.8 539.3 L901.48 539.3 L918.15 539.3 L934.83 539.3 L951.5 539.3 L968.17 478.75 L984.85 539.3 L1001.52 539.3 L1018.2 539.3 L1034.88 478.75 L1051.55 418.2 L1068.22 539.3 L1084.9 539.3 L1101.58 539.3 L1118.25 478.75 L1134.92 539.3 L1151.6 539.3 L1168.28 539.3 L1184.95 539.3 L1201.62 539.3 L1218.3 478.75 L1234.97 478.75 L1234.97 539.3 L751.4 539.3 Z" fill="#fcebda"/><path d="M751.4 478.75 L768.07 539.3 L784.75 478.75 L801.42 478.75 L818.1 539.3 L834.77 539.3 L851.45 539.3 L868.12 478.75 L884.8 539.3 L901.48 539.3 L918.15 539.3 L934.83 539.3 L951.5 539.3 L968.17 478.75 L984.85 539.3 L1001.52 539.3 L1018.2 539.3 L1034.88 478.75 L1051.55 418.2 L1068.22 539.3 L1084.9 539.3 L1101.58 539.3 L1118.25 539.3 L1134.92 539.3 L1151.6 539.3 L1168.28 539.3 L1184.95 539.3 L1201.62 539.3 L1218.3 478.75 L1234.97 478.75 L1234.97 539.3 L751.4 539.3 Z" fill="#d9eafc"/><line x1="747" y1="296.5" x2="1240" y2="296.5" stroke="#7c98b6" stroke-width="1" stroke-dasharray="3 1" opacity="0.25"/><line x1="747" y1="358.5" x2="1240" y2="358.5" stroke="#7c98b6" stroke-width="1" stroke-dasharray="3 1" opacity="0.25"/><line x1="747" y1="418.5" x2="1240" y2="418.5" stroke="#7c98b6" stroke-width="1" stroke-dasharray="3 1" opacity="0.25"/><line x1="747" y1="479.5" x2="1240" y2="479.5" stroke="#7c98b6" stroke-width="1" stroke-dasharray="3 1" opacity="0.25"/><path d="M751.4 478.75 L768.07 539.3 L784.75 357.65 L801.42 418.2 L818.1 478.75 L834.77 539.3 L851.45 478.75 L868.12 418.2 L884.8 539.3 L901.48 539.3 L918.15 539.3 L934.83 539.3 L951.5 539.3 L968.17 478.75 L984.85 539.3 L1001.52 478.75 L1018.2 478.75 L1034.88 418.2 L1051.55 357.65 L1068.22 539.3 L1084.9 539.3 L1101.58 539.3 L1118.25 478.75 L1134.92 539.3 L1151.6 539.3 L1168.28 539.3 L1184.95 539.3 L1201.62 478.75 L1218.3 418.2 L1234.97 478.75" fill="none" stroke="#a0d28c" stroke-width="2" stroke-linejoin="round"/><circle cx="751.4" cy="478.75" r="3.55" fill="#fff" stroke="#a0d28c" stroke-width="2"/><circle cx="768.07" cy="539.3" r="3.55" fill="#fff" stroke="#a0d28c" stroke-width="2"/><circle cx="784.75" cy="357.65" r="3.55" fill="#fff" stroke="#a0d28c" stroke-width="2"/><circle cx="801.42" cy="418.2" r="3.55" fill="#fff" stroke="#a0d28c" stroke-width="2"/><circle cx="818.1" cy="478.75" r="3.55" fill="#fff" stroke="#a0d28c" stroke-width="2"/><circle cx="834.77" cy="539.3" r="3.55" fill="#fff" stroke="#a0d28c" stroke-width="2"/><circle cx="851.45" cy="478.75" r="3.55" fill="#fff" stroke="#a0d28c" stroke-width="2"/><circle cx="868.12" cy="418.2" r="3.55" fill="#fff" stroke="#a0d28c" stroke-width="2"/><circle cx="884.8" cy="539.3" r="3.55" fill="#fff" stroke="#a0d28c" stroke-width="2"/><circle cx="901.48" cy="539.3" r="3.55" fill="#fff" stroke="#a0d28c" stroke-width="2"/><circle cx="918.15" cy="539.3" r="3.55" fill="#fff" stroke="#a0d28c" stroke-width="2"/><circle cx="934.83" cy="539.3" r="3.55" fill="#fff" stroke="#a0d28c" stroke-width="2"/><circle cx="951.5" cy="539.3" r="3.55" fill="#fff" stroke="#a0d28c" stroke-width="2"/><circle cx="968.17" cy="478.75" r="3.55" fill="#fff" stroke="#a0d28c" stroke-width="2"/><circle cx="984.85" cy="539.3" r="3.55" fill="#fff" stroke="#a0d28c" stroke-width="2"/><circle cx="1001.52" cy="478.75" r="3.55" fill="#fff" stroke="#a0d28c" stroke-width="2"/><circle cx="1018.2" cy="478.75" r="3.55" fill="#fff" stroke="#a0d28c" stroke-width="2"/><circle cx="1034.88" cy="418.2" r="3.55" fill="#fff" stroke="#a0d28c" stroke-width="2"/><circle cx="1051.55" cy="357.65" r="3.55" fill="#fff" stroke="#a0d28c" stroke-width="2"/><circle cx="1068.22" cy="539.3" r="3.55" fill="#fff" stroke="#a0d28c" stroke-width="2"/><circle cx="1084.9" cy="539.3" r="3.55" fill="#fff" stroke="#a0d28c" stroke-width="2"/><circle cx="1101.58" cy="539.3" r="3.55" fill="#fff" stroke="#a0d28c" stroke-width="2"/><circle cx="1118.25" cy="478.75" r="3.55" fill="#fff" stroke="#a0d28c" stroke-width="2"/><circle cx="1134.92" cy="539.3" r="3.55" fill="#fff" stroke="#a0d28c" stroke-width="2"/><circle cx="1151.6" cy="539.3" r="3.55" fill="#fff" stroke="#a0d28c" stroke-width="2"/><circle cx="1168.28" cy="539.3" r="3.55" fill="#fff" stroke="#a0d28c" stroke-width="2"/><circle cx="1184.95" cy="539.3" r="3.55" fill="#fff" stroke="#a0d28c" stroke-width="2"/><circle cx="1201.62" cy="478.75" r="3.55" fill="#fff" stroke="#a0d28c" stroke-width="2"/><circle cx="1218.3" cy="418.2" r="3.55" fill="#fff" stroke="#a0d28c" stroke-width="2"/><circle cx="1234.97" cy="478.75" r="3.55" fill="#fff" stroke="#a0d28c" stroke-width="2"/><path d="M751.4 478.75 L768.07 539.3 L784.75 418.2 L801.42 478.75 L818.1 478.75 L834.77 539.3 L851.45 539.3 L868.12 478.75 L884.8 539.3 L901.48 539.3 L918.15 539.3 L934.83 539.3 L951.5 539.3 L968.17 478.75 L984.85 539.3 L1001.52 539.3 L1018.2 539.3 L1034.88 478.75 L1051.55 418.2 L1068.22 539.3 L1084.9 539.3 L1101.58 539.3 L1118.25 478.75 L1134.92 539.3 L1151.6 539.3 L1168.28 539.3 L1184.95 539.3 L1201.62 539.3 L1218.3 478.75 L1234.97 478.75" fill="none" stroke="#f3c48b" stroke-width="2" stroke-linejoin="round"/><circle cx="751.4" cy="478.75" r="3.55" fill="#fff" stroke="#f3c48b" stroke-width="2"/><circle cx="768.07" cy="539.3" r="3.55" fill="#fff" stroke="#f3c48b" stroke-width="2"/><circle cx="784.75" cy="418.2" r="3.55" fill="#fff" stroke="#f3c48b" stroke-width="2"/><circle cx="801.42" cy="478.75" r="3.55" fill="#fff" stroke="#f3c48b" stroke-width="2"/><circle cx="818.1" cy="478.75" r="3.55" fill="#fff" stroke="#f3c48b" stroke-width="2"/><circle cx="834.77" cy="539.3" r="3.55" fill="#fff" stroke="#f3c48b" stroke-width="2"/><circle cx="851.45" cy="539.3" r="3.55" fill="#fff" stroke="#f3c48b" stroke-width="2"/><circle cx="868.12" cy="478.75" r="3.55" fill="#fff" stroke="#f3c48b" stroke-width="2"/><circle cx="884.8" cy="539.3" r="3.55" fill="#fff" stroke="#f3c48b" stroke-width="2"/><circle cx="901.48" cy="539.3" r="3.55" fill="#fff" stroke="#f3c48b" stroke-width="2"/><circle cx="918.15" cy="539.3" r="3.55" fill="#fff" stroke="#f3c48b" stroke-width="2"/><circle cx="934.83" cy="539.3" r="3.55" fill="#fff" stroke="#f3c48b" stroke-width="2"/><circle cx="951.5" cy="539.3" r="3.55" fill="#fff" stroke="#f3c48b" stroke-width="2"/><circle cx="968.17" cy="478.75" r="3.55" fill="#fff" stroke="#f3c48b" stroke-width="2"/><circle cx="984.85" cy="539.3" r="3.55" fill="#fff" stroke="#f3c48b" stroke-width="2"/><circle cx="1001.52" cy="539.3" r="3.55" fill="#fff" stroke="#f3c48b" stroke-width="2"/><circle cx="1018.2" cy="539.3" r="3.55" fill="#fff" stroke="#f3c48b" stroke-width="2"/><circle cx="1034.88" cy="478.75" r="3.55" fill="#fff" stroke="#f3c48b" stroke-width="2"/><circle cx="1051.55" cy="418.2" r="3.55" fill="#fff" stroke="#f3c48b" stroke-width="2"/><circle cx="1068.22" cy="539.3" r="3.55" fill="#fff" stroke="#f3c48b" stroke-width="2"/><circle cx="1084.9" cy="539.3" r="3.55" fill="#fff" stroke="#f3c48b" stroke-width="2"/><circle cx="1101.58" cy="539.3" r="3.55" fill="#fff" stroke="#f3c48b" stroke-width="2"/><circle cx="1118.25" cy="478.75" r="3.55" fill="#fff" stroke="#f3c48b" stroke-width="2"/><circle cx="1134.92" cy="539.3" r="3.55" fill="#fff" stroke="#f3c48b" stroke-width="2"/><circle cx="1151.6" cy="539.3" r="3.55" fill="#fff" stroke="#f3c48b" stroke-width="2"/><circle cx="1168.28" cy="539.3" r="3.55" fill="#fff" stroke="#f3c48b" stroke-width="2"/><circle cx="1184.95" cy="539.3" r="3.55" fill="#fff" stroke="#f3c48b" stroke-width="2"/><circle cx="1201.62" cy="539.3" r="3.55" fill="#fff" stroke="#f3c48b" stroke-width="2"/><circle cx="1218.3" cy="478.75" r="3.55" fill="#fff" stroke="#f3c48b" stroke-width="2"/><circle cx="1234.97" cy="478.75" r="3.55" fill="#fff" stroke="#f3c48b" stroke-width="2"/><path d="M751.4 478.75 L768.07 539.3 L784.75 478.75 L801.42 478.75 L818.1 539.3 L834.77 539.3 L851.45 539.3 L868.12 478.75 L884.8 539.3 L901.48 539.3 L918.15 539.3 L934.83 539.3 L951.5 539.3 L968.17 478.75 L984.85 539.3 L1001.52 539.3 L1018.2 539.3 L1034.88 478.75 L1051.55 418.2 L1068.22 539.3 L1084.9 539.3 L1101.58 539.3 L1118.25 539.3 L1134.92 539.3 L1151.6 539.3 L1168.28 539.3 L1184.95 539.3 L1201.62 539.3 L1218.3 478.75 L1234.97 478.75" fill="none" stroke="#81c1fd" stroke-width="2" stroke-linejoin="round"/><circle cx="751.4" cy="478.75" r="3.55" fill="#fff" stroke="#81c1fd" stroke-width="2"/><circle cx="768.07" cy="539.3" r="3.55" fill="#fff" stroke="#81c1fd" stroke-width="2"/><circle cx="784.75" cy="478.75" r="3.55" fill="#fff" stroke="#81c1fd" stroke-width="2"/><circle cx="801.42" cy="478.75" r="3.55" fill="#fff" stroke="#81c1fd" stroke-width="2"/><circle cx="818.1" cy="539.3" r="3.55" fill="#fff" stroke="#81c1fd" stroke-width="2"/><circle cx="834.77" cy="539.3" r="3.55" fill="#fff" stroke="#81c1fd" stroke-width="2"/><circle cx="851.45" cy="539.3" r="3.55" fill="#fff" stroke="#81c1fd" stroke-width="2"/><circle cx="868.12" cy="478.75" r="3.55" fill="#fff" stroke="#81c1fd" stroke-width="2"/><circle cx="884.8" cy="539.3" r="3.55" fill="#fff" stroke="#81c1fd" stroke-width="2"/><circle cx="901.48" cy="539.3" r="3.55" fill="#fff" stroke="#81c1fd" stroke-width="2"/><circle cx="918.15" cy="539.3" r="3.55" fill="#fff" stroke="#81c1fd" stroke-width="2"/><circle cx="934.83" cy="539.3" r="3.55" fill="#fff" stroke="#81c1fd" stroke-width="2"/><circle cx="951.5" cy="539.3" r="3.55" fill="#fff" stroke="#81c1fd" stroke-width="2"/><circle cx="968.17" cy="478.75" r="3.55" fill="#fff" stroke="#81c1fd" stroke-width="2"/><circle cx="984.85" cy="539.3" r="3.55" fill="#fff" stroke="#81c1fd" stroke-width="2"/><circle cx="1001.52" cy="539.3" r="3.55" fill="#fff" stroke="#81c1fd" stroke-width="2"/><circle cx="1018.2" cy="539.3" r="3.55" fill="#fff" stroke="#81c1fd" stroke-width="2"/><circle cx="1034.88" cy="478.75" r="3.55" fill="#fff" stroke="#81c1fd" stroke-width="2"/><circle cx="1051.55" cy="418.2" r="3.55" fill="#fff" stroke="#81c1fd" stroke-width="2"/><circle cx="1068.22" cy="539.3" r="3.55" fill="#fff" stroke="#81c1fd" stroke-width="2"/><circle cx="1084.9" cy="539.3" r="3.55" fill="#fff" stroke="#81c1fd" stroke-width="2"/><circle cx="1101.58" cy="539.3" r="3.55" fill="#fff" stroke="#81c1fd" stroke-width="2"/><circle cx="1118.25" cy="539.3" r="3.55" fill="#fff" stroke="#81c1fd" stroke-width="2"/><circle cx="1134.92" cy="539.3" r="3.55" fill="#fff" stroke="#81c1fd" stroke-width="2"/><circle cx="1151.6" cy="539.3" r="3.55" fill="#fff" stroke="#81c1fd" stroke-width="2"/><circle cx="1168.28" cy="539.3" r="3.55" fill="#fff" stroke="#81c1fd" stroke-width="2"/><circle cx="1184.95" cy="539.3" r="3.55" fill="#fff" stroke="#81c1fd" stroke-width="2"/><circle cx="1201.62" cy="539.3" r="3.55" fill="#fff" stroke="#81c1fd" stroke-width="2"/><circle cx="1218.3" cy="478.75" r="3.55" fill="#fff" stroke="#81c1fd" stroke-width="2"/><circle cx="1234.97" cy="478.75" r="3.55" fill="#fff" stroke="#81c1fd" stroke-width="2"/><path d="M751.4 539.3 L768.07 539.3 L784.75 539.3 L801.42 539.3 L818.1 539.3 L834.77 539.3 L851.45 539.3 L868.12 539.3 L884.8 539.3 L901.48 539.3 L918.15 539.3 L934.83 539.3 L951.5 539.3 L968.17 539.3 L984.85 539.3 L1001.52 539.3 L1018.2 539.3 L1034.88 539.3 L1051.55 539.3 L1068.22 539.3 L1084.9 539.3 L1101.58 539.3 L1118.25 539.3 L1134.92 539.3 L1151.6 539.3 L1168.28 539.3 L1184.95 539.3 L1201.62 539.3 L1218.3 539.3 L1234.97 539.3" fill="none" stroke="#c0735c" stroke-width="2"/><circle cx="751.4" cy="539.3" r="3.55" fill="#fff" stroke="#c0735c" stroke-width="2"/><circle cx="768.07" cy="539.3" r="3.55" fill="#fff" stroke="#c0735c" stroke-width="2"/><circle cx="784.75" cy="539.3" r="3.55" fill="#fff" stroke="#c0735c" stroke-width="2"/><circle cx="801.42" cy="539.3" r="3.55" fill="#fff" stroke="#c0735c" stroke-width="2"/><circle cx="818.1" cy="539.3" r="3.55" fill="#fff" stroke="#c0735c" stroke-width="2"/><circle cx="834.77" cy="539.3" r="3.55" fill="#fff" stroke="#c0735c" stroke-width="2"/><circle cx="851.45" cy="539.3" r="3.55" fill="#fff" stroke="#c0735c" stroke-width="2"/><circle cx="868.12" cy="539.3" r="3.55" fill="#fff" stroke="#c0735c" stroke-width="2"/><circle cx="884.8" cy="539.3" r="3.55" fill="#fff" stroke="#c0735c" stroke-width="2"/><circle cx="901.48" cy="539.3" r="3.55" fill="#fff" stroke="#c0735c" stroke-width="2"/><circle cx="918.15" cy="539.3" r="3.55" fill="#fff" stroke="#c0735c" stroke-width="2"/><circle cx="934.83" cy="539.3" r="3.55" fill="#fff" stroke="#c0735c" stroke-width="2"/><circle cx="951.5" cy="539.3" r="3.55" fill="#fff" stroke="#c0735c" stroke-width="2"/><circle cx="968.17" cy="539.3" r="3.55" fill="#fff" stroke="#c0735c" stroke-width="2"/><circle cx="984.85" cy="539.3" r="3.55" fill="#fff" stroke="#c0735c" stroke-width="2"/><circle cx="1001.52" cy="539.3" r="3.55" fill="#fff" stroke="#c0735c" stroke-width="2"/><circle cx="1018.2" cy="539.3" r="3.55" fill="#fff" stroke="#c0735c" stroke-width="2"/><circle cx="1034.88" cy="539.3" r="3.55" fill="#fff" stroke="#c0735c" stroke-width="2"/><circle cx="1051.55" cy="539.3" r="3.55" fill="#fff" stroke="#c0735c" stroke-width="2"/><circle cx="1068.22" cy="539.3" r="3.55" fill="#fff" stroke="#c0735c" stroke-width="2"/><circle cx="1084.9" cy="539.3" r="3.55" fill="#fff" stroke="#c0735c" stroke-width="2"/><circle cx="1101.58" cy="539.3" r="3.55" fill="#fff" stroke="#c0735c" stroke-width="2"/><circle cx="1118.25" cy="539.3" r="3.55" fill="#fff" stroke="#c0735c" stroke-width="2"/><circle cx="1134.92" cy="539.3" r="3.55" fill="#fff" stroke="#c0735c" stroke-width="2"/><circle cx="1151.6" cy="539.3" r="3.55" fill="#fff" stroke="#c0735c" stroke-width="2"/><circle cx="1168.28" cy="539.3" r="3.55" fill="#fff" stroke="#c0735c" stroke-width="2"/><circle cx="1184.95" cy="539.3" r="3.55" fill="#fff" stroke="#c0735c" stroke-width="2"/><circle cx="1201.62" cy="539.3" r="3.55" fill="#fff" stroke="#c0735c" stroke-width="2"/><circle cx="1218.3" cy="539.3" r="3.55" fill="#fff" stroke="#c0735c" stroke-width="2"/><circle cx="1234.97" cy="539.3" r="3.55" fill="#fff" stroke="#c0735c" stroke-width="2"/><text x="751.4" y="558" text-anchor="middle" class="ax">2/14/2022</text><text x="834.77" y="558" text-anchor="middle" class="ax">2/19/2022</text><text x="918.15" y="558" text-anchor="middle" class="ax">2/24/2022</text><text x="1001.52" y="558" text-anchor="middle" class="ax">3/1/2022</text><text x="1084.9" y="558" text-anchor="middle" class="ax">3/6/2022</text><text x="1168.28" y="558" text-anchor="middle" class="ax">3/11/2022</text><text x="993" y="576.6" text-anchor="middle" class="axt">Session date</text><text transform="translate(716.5 418) rotate(-90)" text-anchor="middle" class="axr">New contacts</text>
</svg>

<div id="dd">
  <div class="di" style="top:25px">Deals</div>
  <div class="di" style="top:64px">Forecast</div>
  <div class="di" style="top:103px">Tasks</div>
  <div class="abs" style="left:17px;top:148.5px;width:156px;height:2px;background:#33475b"></div>
  <div class="di" style="top:181px">Documents</div>
  <div class="di" style="top:220px">Meetings</div>
  <div class="di" style="top:259px">Payments</div>
  <div class="di" style="top:298px">Playbooks</div>
  <div class="di" style="top:337px">Quotes</div>
  <svg class="abs" style="left:155px;top:298px" width="16" height="16" viewBox="0 0 16 16"><circle cx="8" cy="7.9" r="7" fill="#e66e50"/><path d="M8 12.7 V3.8 M4.1 7.7 L8 3.7 L11.9 7.7" stroke="#fff" stroke-width="1.7" fill="none"/></svg>
</div>

<div class="abs" style="left:1284px;top:550px;width:49px;height:50px;background:#6a78d1;border-radius:24px 24px 3px 24px;box-shadow:0 0 12px rgba(45,62,80,0.2);color:#fff;font-size:14.2px;line-height:50px;text-align:center;-webkit-text-stroke:0.2px #fff">Help</div>

<div class="abs" style="left:1349px;top:0;width:4px;height:617px;background:#f1f1f1"></div>
<div class="abs" style="left:1351px;top:16px;width:2px;height:84px;background:#c1c1c1"></div>
<div class="abs" style="left:0;top:615px;width:1353px;height:1px;background:#fff"></div>
<div class="abs" style="left:0;top:616px;width:1353px;height:1px;background:#111"></div>
</body></html>
